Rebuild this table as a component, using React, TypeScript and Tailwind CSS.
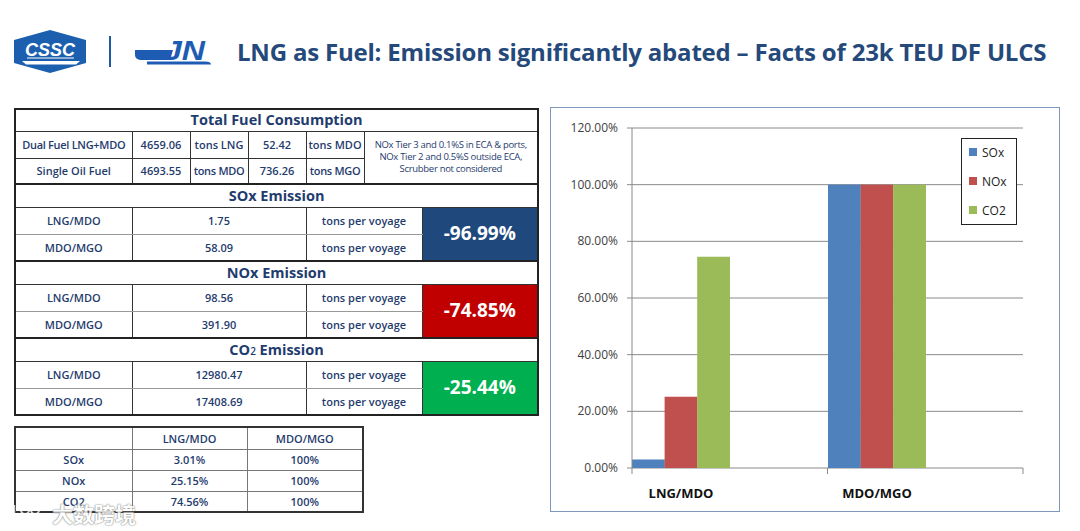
import React from "react"

const font = { fontFamily: '"Open Sans", "Liberation Sans", sans-serif' }

const CsscLogo = () => (
  <svg width="74" height="45" viewBox="13 29 74 45">
    <polygon points="14,40 50,30 86,40 86,63 50,73 14,63" fill="#1b5fae" />
    <text
      x="50"
      y="56"
      textAnchor="middle"
      fill="#fff"
      fontSize="18"
      fontWeight="900"
      fontStyle="italic"
      fontFamily="'Liberation Sans', Arial, sans-serif"
      textLength="50"
    >
      CSSC
    </text>
    <path d="M27 58 L74 58" stroke="#fff" strokeWidth="1.2" />
    <path d="M22 61 L80 61 L76 64.5 L26 64.5 Z" fill="#fff" />
  </svg>
)

const JnLogo = () => (
  <svg width="80" height="28" viewBox="134 36 80 28" overflow="visible">
    <path d="M136 48 L174 48 L171 58 L141 58 Q136 57 136 53 Z" fill="#1e5cb3" />
    <text
      x="165"
      y="58"
      fill="#1e5cb3"
      fontSize="28"
      fontWeight="900"
      fontStyle="italic"
      fontFamily="'Liberation Sans', Arial, sans-serif"
      textLength="41"
      lengthAdjust="spacingAndGlyphs"
    >
      JN
    </text>
    <path d="M148 59.5 L206 59.5 Q212 59.5 212 62.5 L148 62.5 Z" fill="#1e5cb3" />
  </svg>
)

const td = "border border-[#333] p-0 text-center align-middle"

const MainTable = () => (
  <table className="table-fixed border-collapse w-[523px] border-2 border-[#222] text-[#1f3c6e] text-[11px] font-semibold leading-none">
    <colgroup>
      <col className="w-[117px]" />
      <col className="w-[58px]" />
      <col className="w-[58px]" />
      <col className="w-[58px]" />
      <col className="w-[58px]" />
      <col className="w-[58px]" />
      <col className="w-[116px]" />
    </colgroup>
    <tbody>
      <tr className="h-[22px]">
        <td colSpan={7} className={`${td} text-[14.5px] font-bold`}>Total Fuel Consumption</td>
      </tr>
      <tr className="h-[27px]">
        <td className={`${td} tracking-[-0.3px]`}>Dual Fuel LNG+MDO</td>
        <td className={td}>4659.06</td>
        <td className={td}>tons LNG</td>
        <td className={td}>52.42</td>
        <td className={td}>tons MDO</td>
        <td colSpan={2} rowSpan={2} className={`${td} text-[9.5px] font-normal leading-[12px] tracking-[-0.3px]`}>
          NOx Tier 3 and 0.1%S in ECA &amp; ports,
          <br />
          NOx Tier 2 and 0.5%S outside ECA,
          <br />
          Scrubber not considered
        </td>
      </tr>
      <tr className="h-[26px]">
        <td className={td}>Single Oil Fuel</td>
        <td className={td}>4693.55</td>
        <td className={`${td} tracking-[-0.3px]`}>tons MDO</td>
        <td className={td}>736.26</td>
        <td className={`${td} tracking-[-0.3px]`}>tons MGO</td>
      </tr>
      <Section title={<>SOx Emission</>} a="1.75" b="58.09" pct="-96.99%" box="bg-[#1f497d]" />
      <Section title={<>NOx Emission</>} a="98.56" b="391.90" pct="-74.85%" box="bg-[#c00000]" />
      <Section
        title={
          <>
            CO<span className="text-[10px] font-semibold">2</span> Emission
          </>
        }
        a="12980.47"
        b="17408.69"
        pct="-25.44%"
        box="bg-[#00b050]"
      />
    </tbody>
  </table>
)

const Section = ({
  title,
  a,
  b,
  pct,
  box,
}: {
  title: React.ReactNode
  a: string
  b: string
  pct: string
  box: string
}) => (
  <>
    <tr className="h-[23px] border-t-2 border-[#222]">
      <td colSpan={7} className={`${td} text-[14.5px] font-bold`}>
        {title}
      </td>
    </tr>
    <tr className="h-[27px]">
      <td className={`${td} border-b-[#999]`}>LNG/MDO</td>
      <td colSpan={3} className={`${td} border-b-[#999]`}>{a}</td>
      <td colSpan={2} className={`${td} border-b-[#999]`}>tons per voyage</td>
      <td rowSpan={2} className={`${td} ${box} text-white text-[19px] font-bold`}>{pct}</td>
    </tr>
    <tr className="h-[27px]">
      <td className={td}>MDO/MGO</td>
      <td colSpan={3} className={td}>{b}</td>
      <td colSpan={2} className={td}>tons per voyage</td>
    </tr>
  </>
)

const SmallTable = () => (
  <table className="table-fixed border-collapse w-[348px] border-2 border-[#333] text-[#1f3c6e] text-[11px] font-semibold leading-none">
    <colgroup>
      <col className="w-[117px]" />
      <col className="w-[115px]" />
      <col className="w-[116px]" />
    </colgroup>
    <tbody>
      <tr className="h-[22px]">
        <td className={`${td} border-[#777]`}></td>
        <td className={`${td} border-[#777]`}>LNG/MDO</td>
        <td className={`${td} border-[#777]`}>MDO/MGO</td>
      </tr>
      {[
        ["SOx", "3.01%"],
        ["NOx", "25.15%"],
        ["CO2", "74.56%"],
      ].map(([k, v]) => (
        <tr key={k} className="h-[21px]">
          <td className={`${td} border-[#777]`}>{k}</td>
          <td className={`${td} border-[#777]`}>{v}</td>
          <td className={`${td} border-[#777]`}>100%</td>
        </tr>
      ))}
    </tbody>
  </table>
)

const yOf = (v: number) => 468 - (v / 120) * 340

const bars = [
  { x: 632, v: 3.01, c: "#4f81bd" },
  { x: 664.6, v: 25.15, c: "#c0504d" },
  { x: 697.2, v: 74.56, c: "#9bbb59" },
  { x: 828, v: 100, c: "#4f81bd" },
  { x: 860.6, v: 100, c: "#c0504d" },
  { x: 893.2, v: 100, c: "#9bbb59" },
]

const Chart = () => (
  <div className="w-[510px] h-[405px] border border-[#7c98bd] bg-white">
    <svg width="508" height="403" viewBox="551 108 508 403" style={{ fontFamily: "'Open Sans', 'Liberation Sans', sans-serif" }}>
      {[0, 20, 40, 60, 80, 100, 120].map((v) => (
        <g key={v}>
          <line x1="627" x2="1023" y1={yOf(v)} y2={yOf(v)} stroke="#8a8a8a" strokeWidth="1" />
          <text x="618" y={yOf(v) + 4} textAnchor="end" fontSize="12" fill="#404040">
            {v.toFixed(2)}%
          </text>
        </g>
      ))}
      {bars.map((b, i) => (
        <rect key={i} x={b.x} y={yOf(b.v)} width="32.8" height={468 - yOf(b.v)} fill={b.c} />
      ))}
      <line x1="632" x2="632" y1="128" y2="474" stroke="#8a8a8a" />
      <line x1="827.5" x2="827.5" y1="468" y2="474" stroke="#8a8a8a" />
      <line x1="1023" x2="1023" y1="468" y2="474" stroke="#8a8a8a" />
      <text x="681" y="498" textAnchor="middle" fontSize="13" fontWeight="700" fill="#111">
        LNG/MDO
      </text>
      <text x="877" y="498" textAnchor="middle" fontSize="13" fontWeight="700" fill="#111">
        MDO/MGO
      </text>
      <rect x="961.5" y="138.5" width="55" height="86" fill="#fff" stroke="#222" />
      {[
        { y: 152, c: "#4f81bd", t: "SOx" },
        { y: 181, c: "#c0504d", t: "NOx" },
        { y: 210, c: "#9bbb59", t: "CO2" },
      ].map((l) => (
        <g key={l.t}>
          <rect x="969" y={l.y - 4} width="8" height="8" fill={l.c} />
          <text x="982" y={l.y + 4.5} fontSize="12" fill="#222">
            {l.t}
          </text>
        </g>
      ))}
    </svg>
  </div>
)

const Watermark = () => (
  <div className="absolute left-[10px] top-[498px] flex items-center gap-2 opacity-80 pointer-events-none">
    <svg width="34" height="26" viewBox="0 0 34 26">
      <path d="M4 4 L4 22 Q4 25 8 24" stroke="#fff" strokeWidth="2.5" fill="none" />
      <circle cx="15" cy="9" r="4" stroke="#fff" strokeWidth="2" fill="none" />
      <circle cx="25" cy="9" r="4" stroke="#fff" strokeWidth="2" fill="none" />
      <path d="M9 18 Q18 26 30 16" stroke="#fff" strokeWidth="2" fill="none" />
    </svg>
    <span
      className="text-[21px] font-bold text-white [text-shadow:0_0_2px_#777,0_0_1px_#555]"
      style={{ fontFamily: '"Noto Sans CJK SC", sans-serif' }}
    >
      大数跨境
    </span>
  </div>
)

export default function App() {
  return (
    <div className="relative w-[1080px] h-[531px] bg-white overflow-hidden" style={font}>
      <div className="flex items-center h-[45px] mt-[29px] pl-[13px]">
        <CsscLogo />
        <div className="ml-[22px] w-[2px] h-[31px] bg-[#1f5aa6]" />
        <div className="ml-[22px]">
          <JnLogo />
        </div>
        <h1 className="ml-[24px] text-[24px] font-bold text-[#24497a] tracking-[-0.2px] whitespace-nowrap">
          LNG as Fuel: Emission significantly abated – Facts of 23k TEU DF ULCS
        </h1>
      </div>
      <div className="flex items-start mt-[33px] pl-[14px]">
        <div className="flex flex-col gap-[10px] pt-[1px]">
          <MainTable />
          <SmallTable />
        </div>
        <div className="ml-[11px]">
          <Chart />
        </div>
      </div>
      <Watermark />
    </div>
  )
}
